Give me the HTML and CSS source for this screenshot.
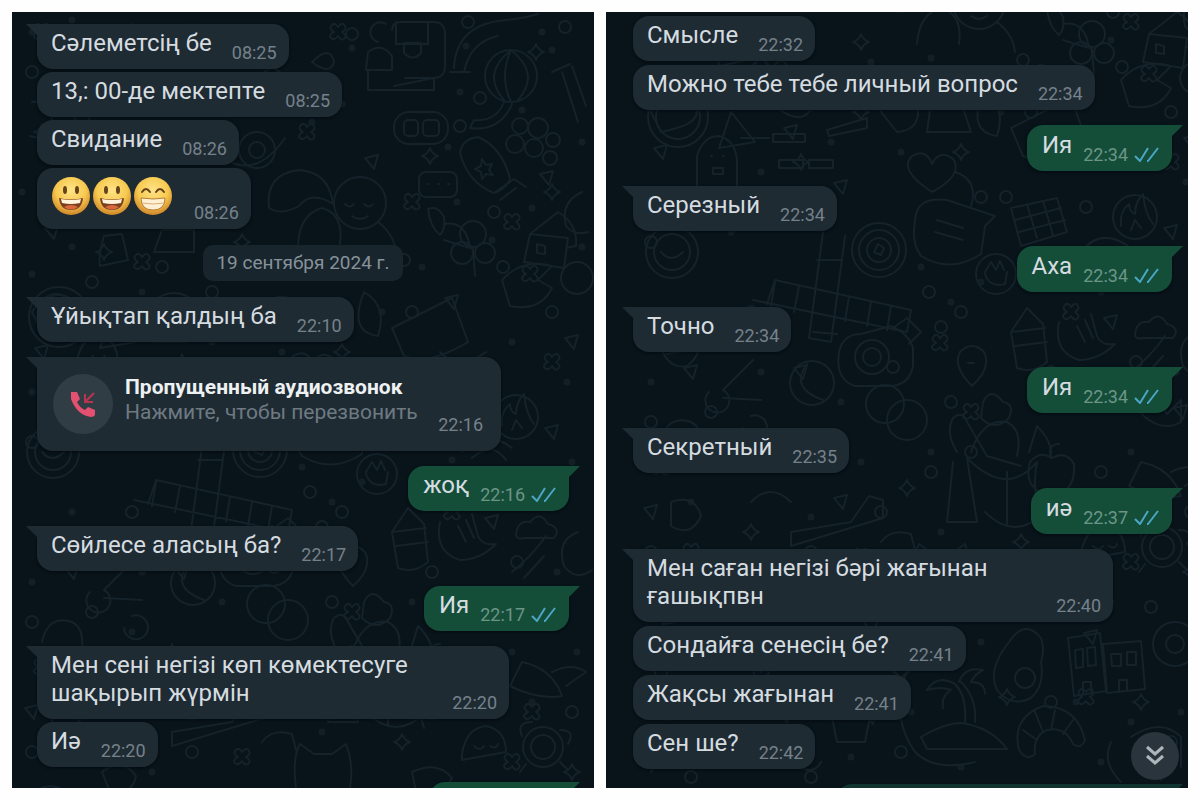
FILE: index.html
```html
<!DOCTYPE html>
<html lang="kk">
<head>
<meta charset="utf-8">
<meta name="viewport" content="width=device-width, initial-scale=1">
<title>Чат</title>
<link rel="stylesheet" href="styles.css">
</head>
<body>
<svg class="defs" aria-hidden="true">
  <defs>
    <marker id="ring" markerWidth="18" markerHeight="18" refX="9" refY="9" markerUnits="userSpaceOnUse"><circle class="ink" cx="9" cy="9" r="6"/></marker>
    <marker id="spark" markerWidth="20" markerHeight="20" refX="10" refY="10" markerUnits="userSpaceOnUse"><path class="ink" d="M10 2q2 6 8 8q-6 2-8 8q-2-6-8-8q6-2 8-8z"/></marker>
    <marker id="tri" markerWidth="20" markerHeight="20" refX="10" refY="10" markerUnits="userSpaceOnUse"><path class="ink" d="M3 6l13-3l-4 14z"/></marker>
    <marker id="flower" markerWidth="24" markerHeight="24" refX="12" refY="12" markerUnits="userSpaceOnUse"><path class="ink" d="M12 7q5-6 7-1q2 3-3 6q6 4 2 7q-3 2-6-3q-4 5-7 2q-3-3 3-6q-6-4-2-7q3-3 6 2z"/></marker>
    <g id="wallpaper">
      <path class="dots" d="M20 20h0M60 8h0M340 36h0M454 34h0M540 38h0M570 130h0M530 20h0M448 80h0M510 98h0M436 135h0M330 92h0M300 110h0M10 180h0M445 190h0M520 196h0M570 235h0M480 228h0M300 246h0M410 255h0M240 250h0M60 235h0M20 262h0M130 280h0M370 300h0M500 330h0M555 370h0M200 330h0M270 340h0M20 380h0M130 360h0M350 470h0M440 448h0M560 450h0M290 455h0M100 420h0M180 400h0M60 500h0M320 490h0M470 480h0M545 560h0M20 570h0M130 560h0M210 590h0M300 640h0M230 650h0M120 620h0M400 590h0M500 640h0M565 640h0M310 720h0M420 705h0M520 690h0M60 690h0M180 705h0M140 760h0M240 780h0M380 790h0M480 790h0M40 800h0M200 840h0M300 850h0M350 830h0M445 890h0M500 910h0M280 900h0M150 900h0M60 920h0M220 945h0M470 950h0M550 900h0M330 955h0"/>
      <path class="ring-set" d="M456 10L553 15L468 86L448 114L340 22L482 200L491 255L392 248L20 60L150 255L80 270L60 170L200 280L350 385L375 385L455 395L400 300L540 300L20 430L298 480L330 500L120 500L310 515L262 555L420 560L505 550L20 610L80 600L320 590L340 640L300 660L250 700L470 660L560 700L20 740L180 740L110 790L430 795L520 795L240 810L30 860L100 850L200 880L420 890L540 930L60 965L180 965L270 940"/>
      <path class="spark-set" d="M418 144L524 40L180 20L120 20L260 60L30 120L300 80L540 180L230 230L92 240L170 350L230 300L330 340L276 676L160 640L480 590L120 720L390 730L560 760L270 860L376 885L20 900L140 930L510 890L530 960"/>
      <path class="tri-set" d="M535 166L360 150L200 70L40 220L440 290L560 330L160 320L30 340L540 420L210 375L480 510L170 560L550 600L60 560L210 690L490 690L20 700L350 800L460 825L160 830L90 890L240 905"/>
      <path class="flower-set" d="M400 190L518 262L326 20L295 120L30 20L70 110L130 250L500 210L540 350L440 500L309 531L340 600L100 650L60 740L230 745L500 750L300 790L130 865L50 830L455 885L520 700L30 655"/>
      <g class="ink">
        <path d="M380 18q0-8 9-8h32q12 0 12 12v32q0 12-12 12h-28M384 10v22h32v-22M392 31h17v10q-8 9-17 0zM366 30a10 10 0 1 1 8-18M356 40q14-10 24 4v14h-26zM356 58v20h66v-12l-40 8"/>
        <path d="M442 56q2-44 52-48q20-2 32-6M452 60q6-30 34-36M438 60h20"/>
        <circle cx="499" cy="64" r="26"/><path d="M499 38q-30 24-7 50M499 38q30 24 7 50M499 38q-12 26 0 52M492 90q-8 20-30 18l-4 8q30 4 42-24"/>
        <rect x="382" y="100" width="54" height="32" rx="15"/><rect x="392" y="108" width="14" height="16" rx="4"/><rect x="411" y="108" width="16" height="16" rx="4"/>
        <circle cx="508" cy="114" r="8"/><circle cx="526" cy="116" r="10"/><circle cx="503" cy="132" r="9"/><circle cx="522" cy="136" r="9"/><circle cx="541" cy="128" r="7"/><circle cx="538" cy="146" r="7"/>
        <path d="M448 141q2-14 18-16q24 10 32 42q-4 10-16 14q-26-10-34-40zM482 181l20-14l12 8M488 188l16-12M470 147l4 6l6-1l-3 6l4 5l-7-1l-4 5l-1-7l-6-3l6-3z"/>
        <rect x="407" y="160" width="38" height="25" rx="7"/><path d="M416 172h1M426 172h1M436 172h1"/>
        <circle cx="348" cy="191" r="26"/><path d="M333 192q5 5 9 0M352 192q5 5 9 0M340 204q8 6 16 0M366 210q16 12 18 30"/>
        <path d="M257 196q-4-34 30-38q30 2 34 34q-22-14-34 2q-18 10-30 2zM286 232q2-30 24-36q22 6 18 36"/>
        <path d="M416 197q10-4 16 8q2 12-4 18q-10-8-12-26zM432 212q22-4 26 24q-14-4-26-8"/>
        <path d="M518 222l28-22q20 12 18 34l-10 2M518 222l-6 28l40 6l4-30zM525 232l8 2v8l-8-1z"/>
        <circle cx="245" cy="138" r="18"/><circle cx="245" cy="138" r="8"/><path d="M215 148q30 18 58-22"/>
        <circle cx="565" cy="266" r="16"/><path d="M570 180q-22 10-16 34q8 10 22 6M550 60l16 50M560 54l14 40M540 60l18-8"/>
        <path d="M92 224q-6 20-4 30l28-6l-6-26zM150 218h32v22h-40zM20 90q20-2 20 20q-4 20-22 14M300 50q18-18 22 0q-4 14-22 0z"/>
        <path d="M20 300q20-30 40-10t-30 30zM140 290q22-18 44 0q-12 30-44 0zM250 300q10-24 36-10q6 28-20 30zM100 300l24 30l-36 6zM352 280q24 14 14 44q-30-4-14-44zM300 290h30l10 30h-44z"/>
        <circle cx="461" cy="222" r="13"/><circle cx="450" cy="241" r="11"/><circle cx="473" cy="241" r="10"/><path d="M461 236l2 28M490 268q20-22 50-14l-14 14l14 8q-12 24-42 18zM380 316l60-30l16 44q-40 24-64 14zM428 340q18 20 46 0"/>
        <circle cx="47" cy="305" r="30"/><circle cx="47" cy="305" r="22"/><path d="M66 376v-32q6-20 22-20q16 4 18 24v28M80 344h1M92 344h1M82 356h10v6h-10zM110 326h28M142 322h32v8h-32zM148 348h24v8h-24zM178 348h24v8h-24zM196 318l40-12v10l-38 8z"/>
        <path d="M301 380q-34-22-20-36q14-8 20 8q8-16 22-4q8 16-22 32zM324 360q24 8 16 34M284 410q0-26 32-22l48 16l-10 10l-4 28q-30 20-60 2q-10-14-6-34zM306 408l26 8M304 420l28 8"/>
        <path d="M380 396l46-10l10 34l-46 14zM384 408l46-12M388 420l46-12M396 392l10 34M412 389l10 34"/>
        <circle cx="504" cy="405" r="22"/><path d="M490 414q-2-14 8-22q0 8 6 10q0-12 8-20q2 20 10 30M500 418l4-10l6 8"/>
        <circle cx="248" cy="438" r="27"/><circle cx="248" cy="438" r="20"/><circle cx="248" cy="438" r="12"/><path d="M243 440l4-8l6 4l-3 7z"/>
        <circle cx="41" cy="440" r="26"/><circle cx="41" cy="440" r="18"/><path d="M30 440q10 12 22 0"/>
        <path d="M122 488l154 32l4-22l-136-30l-8 24M144 470l-4 24M168 474l-5 26M192 420l-14 106l22 4l14-106M218 485l-4 24M240 490l-4 24M260 494l-4 24M186 448h24M182 520l24 2"/>
        <circle cx="365" cy="462" r="20"/><path d="M354 460l6-10l5 8l4-9l4 9M354 462q4 14 20 10l2-12M450 440q20-26 50-4M460 446q20-18 34 2"/>
        <path d="M380 520l16-24l16 16l4 38q-14 12-30 6zM380 520l34-4M384 534l32-4M428 510q-6 30 20 38q20 0 36-16q-14 2-18-8l-6-22M446 514l8 16M454 508l8 18"/>
        <path d="M504 522q2-14 14-12q10-12 18 2q14 4 6 14h-30q-8 2-8-4zM500 560q20-16 34-36M512 566l20-22M566 520q-22 8-14 34q12 16 28 4"/>
        <path d="M28 530q4-14 20-12l20 4q4 20-12 32q-20 4-28-24zM34 534l24-4M36 542l24-4M78 580a12 12 0 1 0 14-2l30-30M92 586l38 2M30 630q6-28 30-20q12 6 10 26M120 604a12 12 0 1 1-8 12"/>
        <path d="M208 540q4-18 22-18l30-8q18 8 22 22v18q-4 20-24 20h-34q-20-6-16-34zM262 516l14-10l14 14l-12 12"/><circle cx="241" cy="545" r="17"/><circle cx="241" cy="545" r="9"/>
        <circle cx="181" cy="571" r="22"/><path d="M176 552q-18 24 16 36"/><circle cx="254" cy="592" r="19"/><circle cx="276" cy="608" r="20"/>
        <path d="M341 574q-20-20-12-34q12-12 24 0q8 16-12 34zM337 551h6M352 590q8-16 20 0q12 2 6 16q-14 14-28 0zM340 640q12-34 36-30q16 8 10 34M326 640q-12-20-4-34q10-8 14 4l20 34l34 10M322 650l-6 60h30l-10-64q40 40 70 4q-6 28 6 66M376 660v54M398 640l8-26q16 16 14 30"/>
        <path d="M421 684q-30-6-22-34q10-12 22-4q14-8 22 6q2 28-22 32zM420 646q-4-14 8-14M500 590q8-12 24-4l12 16l14-14v22q-24 14-50-20z"/>
        <path d="M510 650q30 6 40 34q-24 4-52-10zM540 660q20-10 34 0l-20 14M450 742q4-26 24-28q20 4 20 26l-44 8zM462 734q6 6 10 0M478 734q6 4 8-2"/>
        <circle cx="531" cy="735" r="20"/><circle cx="531" cy="735" r="12"/><path d="M510 724q-6-14 10-14M548 718q16 0 8 14M514 752l-6 8M548 750l8 8"/>
        <path d="M284 776q-4-30 4-44l14 10h18l14-10q8 20 4 44M160 720l60-10l18-26l14 4v18l-92 28zM40 690q24-8 30 14q-10 22-30 10zM120 690q20-20 40 0M354 700q30 30 60 0M250 730q10-14 30-8l4 16"/>
        <path d="M20 780q24-14 40 6t-28 26zM90 760q20-16 34 4q-4 20-26 16zM180 780h36v24h-36zM180 790h36M400 760q26-12 40 6q-12 22-36 14z"/>
        <path d="M378 830q16-24 32-4q4 12 0 24q4 24-10 36q-20 10-34-8q-10-20 12-48z"/><circle cx="394" cy="866" r="10"/>
        <path d="M437 826l32-5l6 58l-32 5zM472 832l38-3l4 48l-38 4zM444 838l8-1v18l-7 1zM456 836l8-1l1 18l-8 1zM480 842h10v12h-9zM496 840h9v13h-9zM452 882v-12h8v11M488 880v-12h8v11"/>
        <circle cx="544" cy="832" r="22"/><circle cx="544" cy="832" r="9"/>
        <path d="M290 925q24-14 40-14q30 4 46 26h-80zM334 910q2-26-10-38M344 910q2-24-14-40M324 872q-18-10-28 6q14-4 24 0q-10 6-8 18M328 870q6-16 24-12q-8 4-12 12q14 0 14 12M280 850q-24 50 4 90q20 20 60 10"/>
        <path d="M388 938q-8-32 24-44q34 0 42 34q-4 10-12 4q-8-18-26-14q-14 6-12 24q-8 8-16-4zM392 918l14 10M404 900l8 20M424 898l-4 20M442 908l-10 14"/>
        <path d="M18 880q30-14 44 10q-14 26-40 14zM90 940q30-30 60 0t40 10M130 890q14-20 36-4l-10 24zM200 900h40l-6 30h-28zM20 960q20-30 44-10M480 930q-10 20 10 40M500 925q30-20 50 0v30"/>
      </g>
    </g>
    <symbol id="ticks" viewBox="0 0 25 16"><path d="M1 9l5 5L14 1M13 14h1L24 1" fill="none" stroke="currentColor" stroke-width="2" stroke-linejoin="round"/></symbol>
    <radialGradient id="face" cx=".5" cy=".35" r=".65"><stop offset="0" stop-color="#ffe487"/><stop offset=".6" stop-color="#f7c94f"/><stop offset="1" stop-color="#cf8628"/></radialGradient>
    <symbol id="smile" viewBox="0 0 41 41">
      <circle cx="20" cy="20" r="19" fill="url(#face)"/>
      <ellipse cx="14" cy="14" rx="2" ry="4" fill="#65431a"/><ellipse cx="26" cy="14" rx="2" ry="4" fill="#65431a"/>
      <path d="M8 22q12 3 24 0q-1 12-12 12t-12-12z" fill="#7a3f1d"/><path d="M10 23q10 2 20 0l-1 4q-9 2-18 0z" fill="#fff3dc"/><path d="M13 31q7-4 14 0q-7 5-14 0z" fill="#d9693c"/>
    </symbol>
    <symbol id="grin" viewBox="0 0 41 41">
      <circle cx="20" cy="20" r="19" fill="url(#face)"/>
      <path d="M9 16q4-6 8 0M23 16q4-6 8 0" fill="none" stroke="#65431a" stroke-width="2" stroke-linecap="round"/>
      <path d="M8 22q12 2 24 0q0 12-12 12t-12-12z" fill="#fff0d2" stroke="#b9803a"/><path d="M9 27q11 2 22 0" fill="none" stroke="#dcae78"/>
    </symbol>
  </defs>
</svg>

<main class="screens">
  <section class="chat chat-first" aria-label="Переписка, часть 1">
    <svg class="wallpaper" viewBox="0 0 582 776" preserveAspectRatio="xMidYMid slice" aria-hidden="true"><use href="#wallpaper"/></svg>
    <div class="messages">
      <article class="bubble in tail"><p>Сәлеметсің бе</p><time>08:25</time></article>
      <article class="bubble in"><p>13,: 00-де мектепте</p><time>08:25</time></article>
      <article class="bubble in"><p>Свидание</p><time>08:26</time></article>
      <article class="bubble in emoji">
        <div class="faces" role="img" aria-label="Три улыбки"><svg><use href="#smile"/></svg><svg><use href="#smile"/></svg><svg><use href="#grin"/></svg></div>
        <time>08:26</time>
      </article>
      <div class="date">19 сентября 2024 г.</div>
      <article class="bubble in tail turn"><p>Ұйықтап қалдың ба</p><time>22:10</time></article>
      <button type="button" class="bubble in tail turn call">
        <span class="call-icon"><svg viewBox="0 0 28 28" aria-hidden="true"><path d="M2 2h6l3 7l-3 3q3 6 8 8l3-3l7 3v5q-1 2-4 2Q8 25 2 9z" fill="#e4506f"/><path d="M25 3l-8 8M16 4v8h8" fill="none" stroke="#b8354e" stroke-width="2"/></svg></span>
        <span class="call-text"><strong>Пропущенный аудиозвонок</strong><span>Нажмите, чтобы перезвонить</span></span>
        <time>22:16</time>
      </button>
      <article class="bubble out tail turn"><p>жоқ</p><time>22:16</time><svg class="ticks" role="img" aria-label="Прочитано"><use href="#ticks"/></svg></article>
      <article class="bubble in tail turn"><p>Сөйлесе аласың ба?</p><time>22:17</time></article>
      <article class="bubble out tail turn"><p>Ия</p><time>22:17</time><svg class="ticks" role="img" aria-label="Прочитано"><use href="#ticks"/></svg></article>
      <article class="bubble in tail turn"><p>Мен сені негізі көп көмектесуге шақырып жүрмін</p><time>22:20</time></article>
      <article class="bubble in"><p>Иә</p><time>22:20</time></article>
      <article class="bubble out tail turn next"></article>
    </div>
  </section>

  <section class="chat chat-second" aria-label="Переписка, часть 2">
    <svg class="wallpaper" viewBox="-25 200 582 776" preserveAspectRatio="xMidYMid slice" aria-hidden="true"><use href="#wallpaper"/></svg>
    <div class="messages">
      <article class="bubble in"><p>Смысле</p><time>22:32</time></article>
      <article class="bubble in"><p>Можно тебе тебе личный вопрос</p><time>22:34</time></article>
      <article class="bubble out tail turn"><p>Ия</p><time>22:34</time><svg class="ticks" role="img" aria-label="Прочитано"><use href="#ticks"/></svg></article>
      <article class="bubble in tail turn"><p>Серезный</p><time>22:34</time></article>
      <article class="bubble out tail turn"><p>Аха</p><time>22:34</time><svg class="ticks" role="img" aria-label="Прочитано"><use href="#ticks"/></svg></article>
      <article class="bubble in tail turn"><p>Точно</p><time>22:34</time></article>
      <article class="bubble out tail turn"><p>Ия</p><time>22:34</time><svg class="ticks" role="img" aria-label="Прочитано"><use href="#ticks"/></svg></article>
      <article class="bubble in tail turn"><p>Секретный</p><time>22:35</time></article>
      <article class="bubble out tail turn"><p>иә</p><time>22:37</time><svg class="ticks" role="img" aria-label="Прочитано"><use href="#ticks"/></svg></article>
      <article class="bubble in tail turn"><p>Мен саған негізі бәрі жағынан ғашықпвн</p><time>22:40</time></article>
      <article class="bubble in"><p>Сондайға сенесің бе?</p><time>22:41</time></article>
      <article class="bubble in"><p>Жақсы жағынан</p><time>22:41</time></article>
      <article class="bubble in"><p>Сен ше?</p><time>22:42</time></article>
      <article class="bubble out tail turn next"></article>
    </div>
    <button type="button" class="to-end" aria-label="К последнему сообщению"><svg viewBox="0 0 20 22" aria-hidden="true"><path d="M2 2l8 7l8-7M2 11l8 7l8-7" fill="none" stroke="currentColor" stroke-width="3"/></svg></button>
  </section>
</main>
</body>
</html>
```

FILE: styles.css
```css
* { box-sizing: border-box; }
body { margin: 0; background: #fefefe; font-family: Roboto, "Noto Sans", sans-serif; }
p { margin: 0; }
button { font: inherit; border: 0; text-align: left; cursor: pointer; }
.defs { position: absolute; width: 0; height: 0; }

.screens { display: grid; grid-template-columns: 1fr 1fr; gap: 12px; height: 100vh; padding: 12px; }
.chat { position: relative; overflow: hidden; background: #08131a; }
.wallpaper { position: absolute; inset: 0; width: 100%; height: 100%; }
.ink { fill: none; stroke: #15222a; stroke-width: 2; stroke-linejoin: round; stroke-linecap: round; }
.dots { fill: none; stroke: #131f27; stroke-width: 7; stroke-linecap: round; }
.ring-set, .spark-set, .tri-set, .flower-set { fill: none; stroke: none; }
.ring-set { marker: url(#ring); }
.spark-set { marker: url(#spark); }
.tri-set { marker: url(#tri); }
.flower-set { marker: url(#flower); }

.messages { position: relative; display: flex; flex-direction: column; gap: 3px; }
.chat-first .messages { padding: 12px 25px 0; }
.chat-second .messages { padding: 4px 16px 0 27px; gap: 4px; }
.chat-second .turn { margin-top: 11px; }
.chat-second .out { padding-top: 6px; }

.bubble {
  position: relative; flex: none; display: flex; align-items: flex-end;
  max-width: 480px; border-radius: 16px; color: #d5dce0; font-size: 24px; line-height: 28px;
  box-shadow: 0 1px 3px #040b10;
}
.chat-first .bubble { max-width: 472px; }
.bubble p { margin-bottom: 5px; }
.turn { margin-top: 12px; }
.in { align-self: flex-start; gap: 20px; padding: 5px 12px 7px 14px; background: #1f2b33; }
.out { align-self: flex-end; gap: 11px; padding: 5px 13px 7px 15px; background: #144e39; }
.tail::before { content: ""; position: absolute; top: 0; width: 12px; height: 12px; background: inherit; }
.in.tail { border-top-left-radius: 0; }
.in.tail::before { right: calc(100% - 1px); clip-path: polygon(0 0, 100% 0, 100% 100%); }
.out.tail { border-top-right-radius: 0; }
.out.tail::before { left: calc(100% - 1px); clip-path: polygon(0 0, 100% 0, 0 100%); }

time { flex: none; color: #75818a; font-size: 18px; line-height: 18px; }
.out time { color: #6d9587; }
.ticks { width: 25px; height: 16px; margin: 0 0 1px -5px; color: #4ba6c4; }

.emoji { padding-top: 8px; }
.faces { display: flex; padding-bottom: 5px; }
.faces svg { width: 41px; height: 41px; }

.date { align-self: center; margin: 13px 0 1px; padding: 0 13px; border-radius: 10px; background: #19252d; color: #87929a; font-size: 19px; line-height: 36px; }

.call { width: 464px; gap: 12px; padding: 17px 18px 17px 16px; }
.call-icon { flex: none; display: grid; place-items: center; width: 60px; height: 60px; border-radius: 50%; background: #313d44; }
.call-icon svg { width: 28px; height: 28px; }
.call-text { flex: 1; align-self: flex-start; padding-top: 1px; color: #6e7a82; font-size: 21px; line-height: 25px; white-space: nowrap; }
.call-text strong { display: block; color: #eef1f2; }
.call-text span { display: block; }

.next { width: 140px; height: 45px; }
.chat-second .next { width: 336px; background: #10342f; }
.to-end { position: absolute; right: 9px; bottom: 8px; display: grid; place-items: center; width: 48px; height: 48px; padding: 0; border-radius: 50%; background: #29343c; color: #aeb6bb; }
.to-end svg { width: 20px; height: 22px; }
```
